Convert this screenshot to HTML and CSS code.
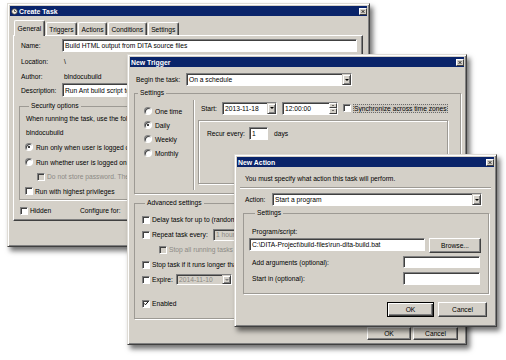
FILE: index.html
```html
<!DOCTYPE html>
<html lang="en">
<head>
    <meta charset="UTF-8">
    <title>Create Task</title>
    <link rel="stylesheet" href="styles.css">
</head>
<body>
<div class="desktop">

    <!-- Create Task -->
    <div class="win win-task">
        <div class="titlebar">
            <svg class="app-icon" viewBox="0 0 8 8"><circle cx="4" cy="4" r="3.2" fill="#f3efe2" stroke="#3b3b3b" stroke-width="0.9"/><path d="M4 2.1V4h1.6" stroke="#1d1d1d" stroke-width="0.8" fill="none"/></svg>
            <span class="title">Create Task</span>
            <span class="close"><svg viewBox="0 0 8 7"><path d="M2 1.5l4 4M6 1.5l-4 4" stroke="#000" stroke-width="1.1"/></svg></span>
        </div>
        <div class="tabs">
            <span class="tab active">General</span>
            <span class="tab">Triggers</span>
            <span class="tab">Actions</span>
            <span class="tab">Conditions</span>
            <span class="tab">Settings</span>
        </div>
        <div class="tab-panel">
            <div class="row row-name"><span class="lbl lbl-task">Name:</span><div class="field field-name">Build HTML output from DITA source files</div></div>
            <div class="row row-info"><span class="lbl lbl-task">Location:</span><span class="value">\</span></div>
            <div class="row row-info"><span class="lbl lbl-task">Author:</span><span class="value">blndocubuild</span></div>
            <div class="row row-desc"><span class="lbl lbl-task">Description:</span><div class="field field-desc">Run Ant build script to generate the output</div></div>
            <fieldset class="group group-security">
                <legend>Security options</legend>
                <div class="row sec-row">When running the task, use the following user account:</div>
                <div class="row sec-row">blndocubuild</div>
                <div class="row sec-row"><span class="radio on"></span>Run only when user is logged on</div>
                <div class="row sec-row"><span class="radio"></span>Run whether user is logged on or not</div>
                <div class="row sec-row sec-indent disabled"><span class="chk off"></span>Do not store password. The task will only have access to local resources</div>
                <div class="row sec-row"><span class="chk"></span>Run with highest privileges</div>
            </fieldset>
            <div class="row row-hidden"><span class="opt-hidden"><span class="chk"></span>Hidden</span><span>Configure for:</span></div>
        </div>
    </div>

    <!-- New Trigger -->
    <div class="win win-trigger">
        <div class="titlebar">
            <span class="title">New Trigger</span>
            <span class="close"><svg viewBox="0 0 8 7"><path d="M2 1.5l4 4M6 1.5l-4 4" stroke="#000" stroke-width="1.1"/></svg></span>
        </div>
        <div class="row row-begin"><span class="lbl lbl-begin">Begin the task:</span><div class="field select-begin">On a schedule<span class="drop"></span></div></div>
        <fieldset class="group group-sched">
            <legend>Settings</legend>
            <div class="sched">
                <div class="freq">
                    <div class="row freq-row"><span class="radio"></span>One time</div>
                    <div class="row freq-row"><span class="radio on"></span>Daily</div>
                    <div class="row freq-row"><span class="radio"></span>Weekly</div>
                    <div class="row freq-row"><span class="radio"></span>Monthly</div>
                </div>
                <div class="vsep"></div>
                <div class="sched-main">
                    <div class="row row-start">
                        <span class="lbl lbl-start">Start:</span>
                        <div class="field field-date">2013-11-18<span class="drop"></span></div>
                        <div class="field field-time">12:00:00<span class="spin"><span class="spin-btn"><i class="tri-up"></i></span><span class="spin-btn"><i class="tri-down"></i></span></span></div>
                        <span class="chk"></span><span class="focus">Synchronize across time zones</span>
                    </div>
                    <div class="recur-box">
                        <div class="row row-recur"><span class="lbl lbl-recur">Recur every:</span><div class="field field-recur">1</div><span class="unit">days</span></div>
                    </div>
                </div>
            </div>
        </fieldset>
        <fieldset class="group group-adv">
            <legend>Advanced settings</legend>
            <div class="row adv-row"><span class="chk"></span>Delay task for up to (random delay):</div>
            <div class="row adv-row"><span class="chk"></span><span class="lbl lbl-repeat">Repeat task every:</span><div class="field disabled field-repeat">1 hour<span class="drop"></span></div></div>
            <div class="row adv-row adv-indent disabled"><span class="chk off"></span>Stop all running tasks at end of repetition duration</div>
            <div class="row adv-row"><span class="chk"></span>Stop task if it runs longer than:</div>
            <div class="row adv-row"><span class="chk"></span><span class="lbl lbl-expire">Expire:</span><div class="field disabled field-expire">2014-11-10<span class="drop"></span></div></div>
            <div class="row adv-row adv-enabled"><span class="chk on"><svg viewBox="0 0 8 8"><path d="M1.5 3.8l1.8 1.9 3.4-3.9" stroke="#000" stroke-width="1.3" fill="none"/></svg></span>Enabled</div>
        </fieldset>
        <div class="buttons buttons-trigger"><span class="btn btn-ok">OK</span><span class="btn btn-cancel">Cancel</span></div>
    </div>

    <!-- New Action -->
    <div class="win win-action">
        <div class="titlebar">
            <span class="title">New Action</span>
            <span class="close"><svg viewBox="0 0 8 7"><path d="M2 1.5l4 4M6 1.5l-4 4" stroke="#000" stroke-width="1.1"/></svg></span>
        </div>
        <div class="row row-intro">You must specify what action this task will perform.</div>
        <div class="hsep"></div>
        <div class="row row-action"><span class="lbl lbl-action">Action:</span><div class="field select-action">Start a program<span class="drop"></span></div></div>
        <fieldset class="group group-action">
            <legend>Settings</legend>
            <div class="row row-prog-lbl">Program/script:</div>
            <div class="row row-prog"><div class="field field-prog">C:\DITA-Project\build-files\run-dita-build.bat</div><span class="btn btn-browse">Browse...</span></div>
            <div class="row row-args"><span class="lbl lbl-args">Add arguments (optional):</span><div class="field field-arg"></div></div>
            <div class="row row-startin"><span class="lbl lbl-args">Start in (optional):</span><div class="field field-arg"></div></div>
        </fieldset>
        <div class="buttons buttons-action"><span class="btn default btn-aok">OK</span><span class="btn btn-acancel">Cancel</span></div>
    </div>

</div>
</body>
</html>
```

FILE: styles.css
```css
body {
    margin: 0;
    background: #fff;
    font-family: "Liberation Sans", Arial, sans-serif;
    font-size: 6.7px;
    color: #000;
}
.desktop {
    position: relative;
    width: 506px;
    height: 360px;
    overflow: hidden;
}

/* windows (free canvas: placed by coordinates) */
.win {
    position: absolute;
    box-sizing: border-box;
    background: #d4d0c8;
    border: 1px solid;
    border-color: #dfdcd6 #404040 #404040 #dfdcd6;
    padding: 2px;
    box-shadow: inset 1px 1px #fff, inset -1px -1px #808080, 3px 4px 5px rgba(0, 0, 0, 0.55);
    display: flex;
    flex-direction: column;
}
.win-task { left: 7px; top: 3px; width: 363px; height: 244px; }
.win-trigger { left: 127px; top: 54px; width: 340px; height: 291px; }
.win-action { left: 234px; top: 154px; width: 263px; height: 173px; }

.titlebar {
    height: 10px;
    flex: none;
    background: #0a246a;
    color: #fff;
    display: flex;
    align-items: center;
    padding-left: 1px;
}
.title {
    font-weight: bold;
    font-size: 6.9px;
}
.app-icon {
    width: 7px;
    height: 7px;
    margin-right: 1px;
}
.close {
    margin-left: auto;
    width: 8px;
    height: 7px;
    box-sizing: border-box;
    background: #d4d0c8;
    border: 1px solid;
    border-color: #fff #404040 #404040 #fff;
    display: flex;
}
.close svg { width: 100%; height: 100%; }

.row {
    display: flex;
    align-items: center;
    white-space: nowrap;
    flex: none;
}
.lbl { flex: none; }
.disabled { color: #8c8a85; }

/* controls */
.field {
    box-sizing: border-box;
    background: #fff;
    border: 1px solid;
    border-color: #808080 #fff #fff #808080;
    box-shadow: inset 1px 1px #404040;
    display: flex;
    align-items: center;
    padding-left: 2px;
    overflow: hidden;
    white-space: nowrap;
    flex: none;
}
.field.disabled { background: #d4d0c8; }
.drop {
    margin-left: auto;
    width: 9px;
    height: 100%;
    box-sizing: border-box;
    background: #d4d0c8;
    border: 1px solid;
    border-color: #d4d0c8 #404040 #404040 #d4d0c8;
    box-shadow: inset 1px 1px #fff, inset -1px -1px #808080;
    display: flex;
    align-items: center;
    justify-content: center;
    flex: none;
}
.drop::after {
    content: "";
    border-left: 2px solid transparent;
    border-right: 2px solid transparent;
    border-top: 2px solid #000;
}
.field.disabled .drop::after { border-top-color: #808080; }
.spin {
    margin-left: auto;
    width: 8px;
    height: 100%;
    display: flex;
    flex-direction: column;
    flex: none;
}
.spin-btn {
    flex: 1;
    background: #d4d0c8;
    border: 1px solid;
    border-color: #fff #404040 #404040 #fff;
    display: flex;
    align-items: center;
    justify-content: center;
}
.tri-up, .tri-down {
    border-left: 1.5px solid transparent;
    border-right: 1.5px solid transparent;
}
.tri-up { border-bottom: 1.5px solid #000; }
.tri-down { border-top: 1.5px solid #000; }

.chk, .radio {
    box-sizing: border-box;
    width: 8px;
    height: 8px;
    flex: none;
    background: #fff;
    border: 1px solid;
    border-color: #808080 #fff #fff #808080;
    box-shadow: inset 1px 1px #404040;
    margin-right: 2px;
    display: flex;
    align-items: center;
    justify-content: center;
}
.chk.off { background: #d4d0c8; }
.chk svg { width: 7px; height: 7px; }
.radio { border-radius: 50%; margin-right: 3px; }
.radio.on::after {
    content: "";
    width: 2px;
    height: 2px;
    border-radius: 50%;
    background: #000;
}

.btn {
    box-sizing: border-box;
    background: #d4d0c8;
    border: 1px solid;
    border-color: #fff #404040 #404040 #fff;
    box-shadow: inset -1px -1px #808080;
    display: flex;
    align-items: center;
    justify-content: center;
    flex: none;
}
.btn.default {
    border-color: #000;
    box-shadow: inset 1px 1px #fff, inset -1px -1px #404040, inset -2px -2px #808080;
}

.group {
    margin: 0;
    padding: 0;
    min-width: 0;
    border: 1px solid #9d9a94;
    box-shadow: 1px 1px 0 #fff;
}
.group legend {
    padding: 0 2px;
    margin-left: 3px;
    line-height: 10px;
    height: 10px;
}
.etched {
    border: 1px solid #9d9a94;
}

/* Create Task */
.tabs {
    display: flex;
    align-items: flex-end;
    height: 15px;
    margin-top: 4px;
    padding-left: 4px;
    flex: none;
}
.tab {
    height: 13px;
    box-sizing: border-box;
    padding: 0 2.5px;
    border: 1px solid;
    border-color: #fff #404040 transparent #fff;
    border-bottom: none;
    border-radius: 2px 2px 0 0;
    box-shadow: inset -1px 0 #808080;
    margin-right: 1px;
    display: flex;
    align-items: center;
}
.tab.active {
    height: 16px;
    margin-bottom: -1px;
    background: #d4d0c8;
    position: relative;
    z-index: 1;
}
.tab-panel {
    box-sizing: border-box;
    margin-left: 3px;
    width: 350px;
    height: 186px;
    border: 1px solid;
    border-color: #fff #404040 #404040 #fff;
    box-shadow: inset -1px -1px #808080;
    display: flex;
    flex-direction: column;
    flex: none;
}
.lbl-task { width: 41px; }
.row-name { margin-top: 3px; height: 13px; padding-left: 7px; }
.field-name { width: 295px; height: 13px; }
.row-info { margin-top: 3px; height: 12px; padding-left: 7px; }
.value { padding-left: 2px; }
.row-desc { margin-top: 1px; height: 14px; padding-left: 7px; }
.field-desc { width: 295px; height: 14px; }
.group-security { margin: 4px 6px 0 5px; padding: 0 6px; }
.sec-row { height: 14.6px; }
.sec-row .radio, .sec-row .chk { margin-left: -1px; }
.sec-indent { padding-left: 12px; }
.row-hidden { margin-top: 4px; height: 14px; padding-left: 6px; }
.opt-hidden { width: 60px; display: flex; align-items: center; }

/* New Trigger */
.row-begin { margin-top: 6px; height: 13px; padding-left: 6px; }
.lbl-begin { width: 50px; }
.select-begin { width: 166px; height: 13px; }
.group-sched { margin: 2px 3px 0 4px; height: 104px; }
.sched { display: flex; height: 93px; }
.freq { width: 49px; padding: 6px 0 0 9px; }
.freq-row { height: 14px; }
.vsep {
    width: 1px;
    margin: 2px 0 1px;
    background: #9d9a94;
    border-right: 1px solid #fff;
}
.sched-main { padding-top: 3px; }
.row-start { height: 14px; padding-left: 6px; }
.lbl-start { width: 21px; }
.field-date { width: 55px; height: 13px; margin-right: 5px; }
.field-time { width: 56px; height: 13px; margin-right: 5px; }
.focus {
    padding: 1px 1px;
    background: #ccc8c0;
    outline: 1px dotted #6a6a6a;
    outline-offset: -1px;
}
.recur-box {
    margin: 5px 0 0 3px;
    width: 250px;
    height: 64px;
    box-sizing: border-box;
    border: 1px solid #9d9a94;
    box-shadow: inset 1px 1px #fff, 1px 1px #fff;
    padding: 6px 0 0 8px;
}
.row-recur { height: 13px; }
.lbl-recur { width: 42px; }
.field-recur { width: 19px; height: 13px; }
.unit { margin-left: 6px; }
.group-adv { margin: 4px 3px 0 4px; padding: 4px 0 7px 7px; }
.adv-row { height: 15px; }
.adv-indent { padding-left: 17px; }
.adv-enabled { margin-top: 9px; }
.lbl-repeat { width: 61px; }
.field-repeat { width: 60px; height: 12px; }
.lbl-expire { width: 24px; }
.field-expire { width: 56px; height: 11px; }
.buttons {
    display: flex;
    justify-content: flex-end;
    flex: none;
}
.buttons-trigger { margin-top: 8px; margin-right: 6px; gap: 2px; }
.btn-ok { width: 44px; height: 13px; }
.btn-cancel { width: 45px; height: 13px; }

/* New Action */
.row-intro { margin-top: 5px; height: 12px; padding-left: 8px; }
.hsep {
    margin: 3px 3px 0 3px;
    height: 1px;
    background: #9d9a94;
    border-bottom: 1px solid #fff;
    flex: none;
}
.row-action { margin-top: 4px; height: 13px; padding-left: 8px; }
.lbl-action { width: 27px; }
.select-action { width: 210px; height: 13px; }
.group-action { margin: 2px 5px 0 6px; padding: 7px 0 8px 8px; }
.row-prog-lbl { height: 12px; }
.row-prog { margin-top: 1px; margin-left: -3px; gap: 4px; height: 15px; align-items: flex-start; }
.field-prog { width: 176px; height: 13px; }
.btn-browse { width: 52px; height: 15px; }
.row-args { margin-top: 3px; height: 12px; }
.row-startin { margin-top: 4px; height: 13px; }
.lbl-args { width: 151px; }
.field-arg { width: 77px; height: 100%; }
.buttons-action { margin-top: 8px; margin-right: 7px; gap: 4px; }
.btn-aok { width: 47px; height: 15px; }
.btn-acancel { width: 49px; height: 15px; }
```
